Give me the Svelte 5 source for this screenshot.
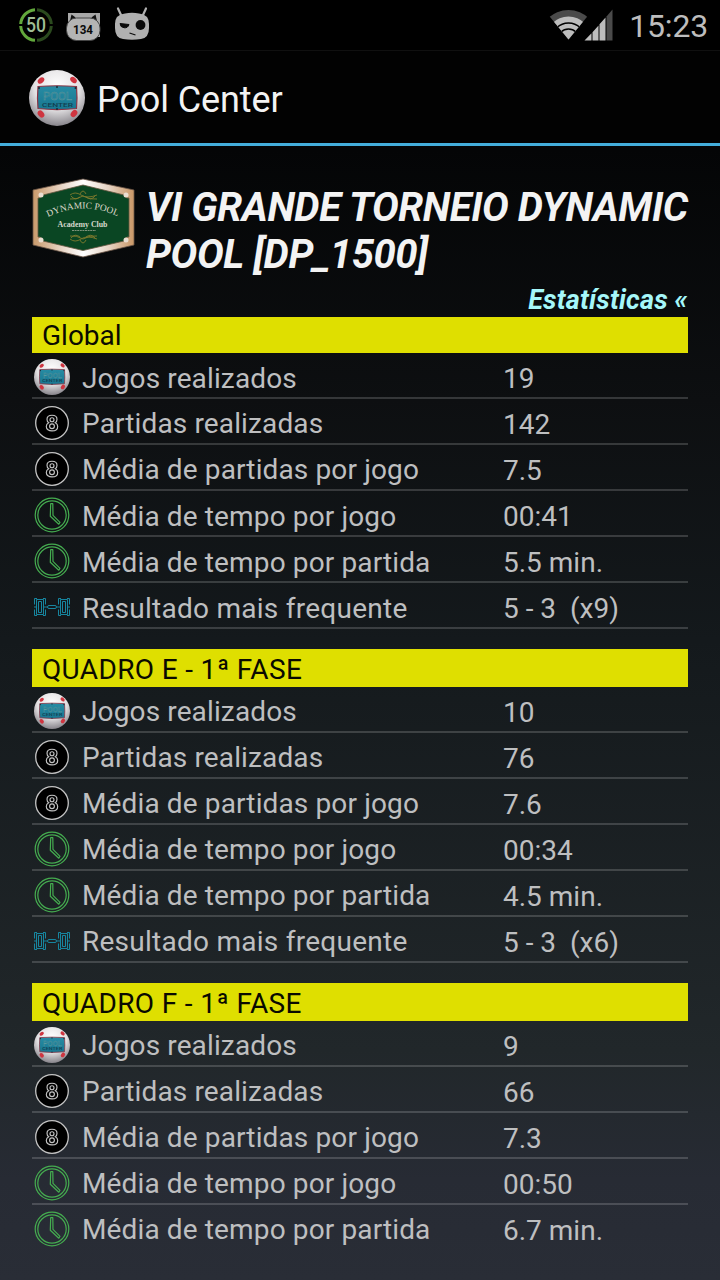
<script lang="ts">
  type Icon = "ball" | "eight" | "clock" | "score";

  interface Row {
    icon: Icon;
    label: string;
    value: string;
  }

  interface Section {
    title: string;
    rows: Row[];
  }

  const kinds: { icon: Icon; label: string }[] = [
    { icon: "ball", label: "Jogos realizados" },
    { icon: "eight", label: "Partidas realizadas" },
    { icon: "eight", label: "Média de partidas por jogo" },
    { icon: "clock", label: "Média de tempo por jogo" },
    { icon: "clock", label: "Média de tempo por partida" },
    { icon: "score", label: "Resultado mais frequente" },
  ];

  function makeSection(title: string, values: string[]): Section {
    return { title, rows: values.map((value, i) => ({ ...kinds[i], value })) };
  }

  const sections = [
    makeSection("Global", ["19", "142", "7.5", "00:41", "5.5 min.", "5 - 3  (x9)"]),
    makeSection("QUADRO E - 1ª FASE", ["10", "76", "7.6", "00:34", "4.5 min.", "5 - 3  (x6)"]),
    makeSection("QUADRO F - 1ª FASE", ["9", "66", "7.3", "00:50", "6.7 min."]),
  ];
</script>

{#snippet poolBall(size: number)}
  <svg width={size} height={size} viewBox="0 0 56 56">
    <defs>
      <radialGradient id="ball-shade" cx="0.5" cy="0.3" r="0.74">
        <stop offset="0" stop-color="#fff" />
        <stop offset="0.55" stop-color="#e2e0e2" />
        <stop offset="1" stop-color="#7b787f" />
      </radialGradient>
      <linearGradient id="plate" x1="0" y1="0" x2="0" y2="1">
        <stop offset="0" stop-color="#278ca4" />
        <stop offset="1" stop-color="#187791" />
      </linearGradient>
    </defs>
    <circle cx="28" cy="28" r="28" fill="url(#ball-shade)" />
    <g fill="#cf3540">
      <ellipse cx="12" cy="10.500" rx="3.700" ry="2.600" transform="rotate(-40 12 10.500)" />
      <ellipse cx="44.500" cy="10" rx="3.700" ry="2.600" transform="rotate(40 44.500 10)" />
      <ellipse cx="12" cy="44" rx="3.900" ry="2.900" transform="rotate(50 12 44)" />
      <ellipse cx="45" cy="43.500" rx="3.900" ry="2.900" transform="rotate(-50 45 43.500)" />
    </g>
    <path d="M9 16.500Q28 15 47.500 16.500Q48.500 28 47.500 38.500Q28 40.800 9 38.500Q8 28 9 16.500Z" fill="url(#plate)" stroke="#8a3444" stroke-width="1.200" />
    <g fill="#182a35">
      <circle cx="28" cy="17" r="1" />
      <circle cx="28" cy="39" r="1" />
      <circle cx="10" cy="18" r="1" />
      <circle cx="46.500" cy="18" r="1" />
    </g>
    <text x="28.500" y="30" text-anchor="middle" font-size="11.500" fill="#1d7088" stroke="#5a9ba2" stroke-width="0.500" textLength="29" lengthAdjust="spacingAndGlyphs">POOL</text>
    <text x="28.500" y="36.500" text-anchor="middle" font-size="5.500" font-weight="500" fill="#123e50" textLength="31" lengthAdjust="spacingAndGlyphs">CENTER</text>
  </svg>
{/snippet}

{#snippet rowIcon(icon: Icon)}
  {#if icon === "ball"}
    {@render poolBall(36)}
  {:else if icon === "eight"}
    <svg width="36" height="36" viewBox="0 0 36 36">
      <circle cx="18" cy="18" r="16.300" fill="#000" stroke="#c4c4c4" stroke-width="1.300" />
      <g fill="none" stroke="#c4c4c4" stroke-width="1.150">
        <path d="M18 10.200C20.800 10.200 23 11.700 23 14.200C23 15.900 22.200 17.200 21.300 17.700C22.700 18.400 23.700 19.700 23.700 21.400C23.700 24.200 21.300 25.900 18 25.900C14.700 25.900 12.300 24.200 12.300 21.400C12.300 19.700 13.300 18.400 14.700 17.700C13.800 17.200 13 15.900 13 14.200C13 11.700 15.200 10.200 18 10.200Z" />
        <circle cx="18" cy="14.700" r="2" />
        <circle cx="18" cy="21.200" r="2.400" />
      </g>
    </svg>
  {:else if icon === "clock"}
    <svg width="36" height="36" viewBox="0 0 36 36">
      <g fill="none" stroke="#45ad50" stroke-width="1.200">
        <circle cx="18" cy="18" r="16.800" />
        <circle cx="18" cy="18" r="14.200" />
        <path d="M16.700 6.700H18.800L19 18.300L26 25.300L24.800 27.200L16.300 19.300Z" stroke-linejoin="round" />
      </g>
    </svg>
  {:else}
    <svg width="36" height="36" viewBox="0 0 36 36">
      <g fill="none" stroke="#1786a0" stroke-width="1">
        <path d="M3 9.500H0.500V15.500M0.500 20.500V26.500H3M9 9.500H11.500V15.500M11.500 20.500V26.500H9M27 9.500H24.500V15.500M24.500 20.500V26.500H27M33 9.500H35.500V15.500M35.500 20.500V26.500H33" />
        <path d="M2.500 10.500H9.500V25.500H2.500ZM26.500 10.500H33.500V25.500H26.500Z" />
        <path d="M4.500 12.500H7.500V23.500H4.500ZM28.500 12.500H31.500V23.500H28.500Z" />
        <path d="M0 18H3M9 18H13M23 18H27M33 18H36" />
        <rect x="13.500" y="16.500" width="9" height="3" rx="1.500" />
      </g>
    </svg>
  {/if}
{/snippet}

<div class="screen">
  <div class="status-bar">
    <div class="notifications">
      <svg class="battery" width="36" height="36" viewBox="0 0 36 36">
        <g fill="none" stroke-width="3">
          <path d="M17 33.300A15.400 15.400 0 0 1 2.700 19M2.700 17A15.400 15.400 0 0 1 17 2.700" stroke="#62a83c" />
          <path d="M19 2.700A15.400 15.400 0 0 1 33.300 17M33.300 19A15.400 15.400 0 0 1 19 33.300" stroke="#2b4a1e" />
        </g>
        <text x="18" y="25" text-anchor="middle" font-size="19.500" font-weight="500" fill="#9fbd94" textLength="20" lengthAdjust="spacingAndGlyphs">50</text>
      </svg>
      <svg class="cat" width="36" height="30" viewBox="0 0 36 30">
        <path d="M2 1H34V25H2Z" fill="#a8a8a8" />
        <path d="M4 9L5.500 2.500L11 6.500H24L29.500 2.500L31 9Z" fill="#111" />
        <path d="M9 2H26V5.500H9Z" fill="#a8a8a8" />
        <rect x="0.500" y="6" width="33.500" height="22.500" rx="10" fill="#b4b4b4" stroke="#444" />
        <text x="17" y="22" text-anchor="middle" font-size="12.500" font-weight="700" fill="#0a0a0a" textLength="20" lengthAdjust="spacingAndGlyphs">134</text>
      </svg>
      <svg class="cid" width="36" height="34" viewBox="0 0 36 34">
        <path d="M4 1.500L7.500 9M32 1.500L28.500 9" stroke="#b0b0b0" stroke-width="2.200" stroke-linecap="round" />
        <path d="M11 6.500Q18 5 25 6.500Q35 7.500 35 17V21Q35 31 27 32Q18 33.500 9 32Q1 31 1 21V17Q1 7.500 11 6.500Z" fill="#b0b0b0" />
        <path d="M6 16.500L15 17.500A4.600 4.600 0 0 1 6 16.500Z" fill="#0a0a0a" stroke="#0a0a0a" />
        <circle cx="26.500" cy="18" r="4.900" fill="#0a0a0a" />
        <path d="M15.500 26L21.500 28" stroke="#0a0a0a" stroke-width="1.200" />
      </svg>
    </div>
    <div class="system">
      <svg width="65" height="34" viewBox="0 0 65 34">
        <clipPath id="wifi-fan"><path d="M19.500 32.500L-3 5V-4H42V5Z" /></clipPath>
        <g clip-path="url(#wifi-fan)">
          <circle cx="19.500" cy="32.500" r="29.500" fill="#4a4a4a" />
          <circle cx="19.500" cy="32.500" r="23" fill="#bdbdbd" />
          <g fill="none" stroke="#000" stroke-width="1.500">
            <circle cx="19.500" cy="32.500" r="16.500" />
            <circle cx="19.500" cy="32.500" r="10.500" />
          </g>
        </g>
        <path d="M35.500 33.500L42.500 26.200V33.500ZM43.500 25.200L49.500 18.500V33.500H43.500ZM50.500 17.300L56.500 10.500V33.500H50.500Z" fill="#bdbdbd" />
        <path d="M57.500 9.400L63.500 2.500V33.500H57.500Z" fill="#4a4a4a" />
      </svg>
      <span class="time">15:23</span>
    </div>
  </div>

  <header class="action-bar">
    {@render poolBall(56)}
    <span class="app-name">Pool Center</span>
  </header>

  <main>
    <div class="tournament">
      <svg class="badge" width="103" height="80" viewBox="0 0 103 80">
        <defs>
          <linearGradient id="frame" x1="0" y1="0" x2="1" y2="0">
            <stop offset="0" stop-color="#c99a6b" />
            <stop offset="0.3" stop-color="#ead9cb" />
            <stop offset="0.5" stop-color="#fff" />
            <stop offset="0.75" stop-color="#e6d3c3" />
            <stop offset="1" stop-color="#c99766" />
          </linearGradient>
          <path id="arch" d="M16 39Q51 22 87 39" />
        </defs>
        <path d="M1 12L51 1L102 12V67L51 79L1 67Z" fill="url(#frame)" stroke="#6b5647" stroke-width="0.800" />
        <path d="M11 17Q8 21 6 20V59Q9 58 11 63L51 72.500L92 63Q94 58 97 59V20Q94 21 92 17L51 7Z" fill="#0a4623" stroke="#65563f" stroke-width="0.800" />
        <g fill="#eadfd2">
          <circle cx="9" cy="17" r="2.500" />
          <circle cx="94" cy="17" r="2.500" />
          <circle cx="9" cy="62" r="2.500" />
          <circle cx="94" cy="62" r="2.500" />
        </g>
        <g fill="none" stroke="#807b2e" stroke-width="0.900">
          <path d="M38 17Q43 13 49 17T65 17M38 21Q44 22 51 18Q58 22 65 21M39 18Q43 23 48 19M63 18Q59 23 54 19M48 16Q51 10 54 16" />
          <path d="M38 61Q43 65 49 61T65 61M38 58Q44 57 51 61Q58 57 65 58M39 60Q43 55 48 59M63 60Q59 55 54 59M48 62Q51 68 54 62" />
        </g>
        <text class="serif" font-size="9.500" fill="#ded8ca"><textPath href="#arch" textLength="72" lengthAdjust="spacingAndGlyphs">DYNAMIC POOL</textPath></text>
        <text class="serif" x="50.500" y="49" text-anchor="middle" font-size="9" font-weight="700" fill="#d6d9cd" textLength="50" lengthAdjust="spacingAndGlyphs">Academy Club</text>
        <path d="M40 52.500H64" stroke="#9ba58f" stroke-width="0.800" stroke-dasharray="2 0.600" />
      </svg>
      <h1>VI GRANDE TORNEIO DYNAMIC POOL [DP_1500]</h1>
    </div>
    <div class="subtitle">Estatísticas «</div>

    {#each sections as section}
      <section>
        <h2>{section.title}</h2>
        {#each section.rows as row}
          <div class="row">
            {@render rowIcon(row.icon)}
            <span class="label {row.icon}">{row.label}</span>
            <span class="value">{row.value}</span>
          </div>
        {/each}
      </section>
    {/each}
  </main>
</div>

<style>
  :global(body) {
    margin: 0;
    background: #000;
  }

  .screen {
    width: 720px;
    height: 1280px;
    overflow: hidden;
    display: flex;
    flex-direction: column;
    font-family: Roboto, "Noto Sans", sans-serif;
    background: linear-gradient(#000 50px, #040506 150px, #0d0f11 400px, #14191c 640px, #21272a 1050px, #272b34 1180px, #292d36 1280px);
  }

  svg {
    display: block;
    flex-shrink: 0;
  }

  .serif {
    font-family: "Liberation Serif", serif;
  }

  .status-bar {
    box-sizing: border-box;
    height: 50px;
    display: flex;
    justify-content: space-between;
    padding: 0 12px 0 18px;
    background: #000;
  }

  .notifications {
    display: flex;
    align-items: flex-start;
    gap: 12px;
    padding-top: 7px;
  }

  .cat {
    margin-top: 5px;
  }

  .system {
    display: flex;
    align-items: center;
    gap: 15px;
  }

  .system svg {
    margin-top: -3px;
  }

  .time {
    margin-top: 1px;
    font-size: 32px;
    color: #bdbdbd;
    letter-spacing: -0.2px;
  }

  .action-bar {
    box-sizing: border-box;
    height: 96px;
    display: flex;
    align-items: center;
    gap: 12px;
    padding: 2px 0 0 29px;
    background: #020202;
    border-top: 1px solid #101010;
    border-bottom: 3px solid #43addb;
  }

  .app-name {
    margin-top: 3px;
    font-size: 36px;
    letter-spacing: -0.1px;
    color: #f3f3f3;
  }

  main {
    padding: 32px 32px 0;
  }

  .tournament {
    display: flex;
    gap: 11px;
    height: 106px;
  }

  h1 {
    margin: 6px -12px 0 0;
    font-size: 40px;
    line-height: 47px;
    font-weight: 700;
    font-style: italic;
    letter-spacing: -0.42px;
    color: #f3f3f3;
  }

  .subtitle {
    height: 33px;
    line-height: 33px;
    text-align: right;
    font-size: 27px;
    font-weight: 700;
    font-style: italic;
    letter-spacing: 0.18px;
    color: #a5f7f9;
  }

  section {
    margin-bottom: 20px;
  }

  h2 {
    margin: 0;
    height: 38px;
    line-height: 41px;
    padding-left: 10px;
    font-size: 28px;
    font-weight: 400;
    letter-spacing: 0.35px;
    color: #0a0a00;
    background: #dfdf00;
  }

  section:first-of-type h2 {
    height: 36px;
    line-height: 37px;
    letter-spacing: 0;
  }

  .row {
    box-sizing: border-box;
    height: 46px;
    display: flex;
    align-items: center;
    padding: 4px 0 0 2px;
    border-bottom: 2px solid rgba(255, 255, 255, 0.17);
    color: #bebfc0;
    font-size: 28px;
    line-height: 34px;
    white-space: pre;
  }

  section:last-child .row:last-child {
    border-bottom-color: transparent;
  }

  .label {
    width: 421px;
    padding: 2px 0 0 12px;
    box-sizing: border-box;
    margin-right: 12px;
    letter-spacing: 0.13px;
  }

  .label.score {
    letter-spacing: 0.26px;
  }

  section:first-of-type .label:not(.eight) {
    padding-top: 4px;
  }

  .value {
    margin-top: 4px;
  }
</style>
